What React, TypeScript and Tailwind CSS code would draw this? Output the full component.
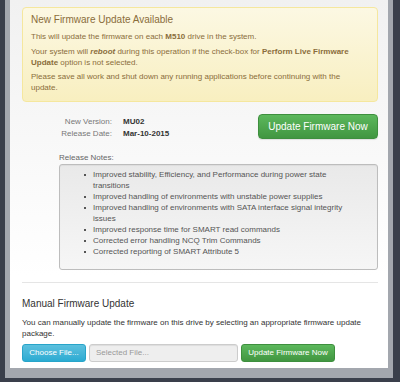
const NOTES = [
  "Improved stability, Efficiency, and Performance during power state transitions",
  "Improved handling of environments with unstable power supplies",
  "Improved handling of environments with SATA interface signal integrity issues",
  "Improved response time for SMART read commands",
  "Corrected error handling NCQ Trim Commands",
  "Corrected reporting of SMART Attribute 5",
];

export default function App() {
  return (
    <div className="w-[400px] h-[382px] bg-[#3a3f4b] pl-[5px] pr-[7px] pb-[4px] flex">
      <div className="flex-1 bg-[#a3a7ae] pl-[5px] pr-[5px] pb-[10px] flex">
        <div className="flex-1 flex flex-col bg-linear-to-b from-[#f1f1f1] to-white to-75% pl-[12px] pr-[10px] pt-[7px] pb-[6px] font-['Liberation_Sans',Arial,sans-serif] text-[8px] leading-[11px] text-[#333]">
          {/* Warning alert */}
          <div className="border border-[#f5e79e] rounded-[4px] bg-linear-to-b from-[#fcf8e3] to-[#f8efc0] pt-[6px] pb-[8px] pl-[8px] pr-[11px] text-[#8a6d3b]">
            <h4 className="text-[10px] leading-[12px] mb-[5px]">
              New Firmware Update Available
            </h4>
            <p>
              This will update the firmware on each <b>M510</b> drive in the
              system.
            </p>
            <p className="mt-[4px]">
              Your system will{" "}
              <b>
                <i>reboot</i>
              </b>{" "}
              during this operation if the check-box for{" "}
              <b>Perform Live Firmware Update</b> option is not selected.
            </p>
            <p className="mt-[3px]">
              Please save all work and shut down any running applications
              before continuing with the update.
            </p>
          </div>

          {/* Version row */}
          <div className="mt-[12px] flex items-start">
            <div className="mt-[2px] grid grid-cols-[90px_auto] gap-x-[11px] leading-[12px]">
              <span className="text-right text-[#777]">New Version:</span>
              <span className="font-bold text-[#333]">MU02</span>
              <span className="text-right text-[#777]">Release Date:</span>
              <span className="font-bold text-[#333]">Mar-10-2015</span>
            </div>
            <div className="flex-1" />
            <button className="w-[120px] h-[25px] rounded-[4px] border border-[#3e8f3e] bg-linear-to-b from-[#5cb85c] to-[#419641] text-white text-[10px] shadow-[0_1px_1px_rgba(0,0,0,0.1)]">
              Update Firmware Now
            </button>
          </div>

          {/* Release notes */}
          <div className="mt-[12px] ml-[37px]">
            <div className="text-[#666]">Release Notes:</div>
            <ul className="mt-[1px] h-[106px] border border-[#bdbdbd] rounded-[3px] bg-linear-to-b from-[#e9e9e9] to-[#f6f6f6] shadow-[inset_0_1px_1px_rgba(0,0,0,0.05)] pt-[4px] pl-[24px] pr-[17px] text-[#555]">
              {NOTES.map((n) => (
                <li key={n} className="flex">
                  <span className="w-[9px] shrink-0 pt-[5px]">
                    <span className="block w-[2px] h-[2px] bg-[#555]" />
                  </span>
                  <span>{n}</span>
                </li>
              ))}
            </ul>
          </div>

          <div className="mt-[12px] h-px bg-[#e5e5e5]" />

          {/* Manual update */}
          <h4 className="mt-[15px] text-[10px] leading-[12px] text-[#333]">
            Manual Firmware Update
          </h4>
          <p className="mt-[7px] text-[#333]">
            You can manually update the firmware on this drive by selecting an
            appropriate firmware update package.
          </p>
          <div className="mt-[5px] flex gap-[3px] h-[19px]">
            <button className="w-[64px] rounded-[3px] border border-[#28a4c9] bg-linear-to-b from-[#5bc0de] to-[#2aabd2] text-white">
              Choose File...
            </button>
            <div className="w-[149px] flex items-center rounded-[3px] border border-[#ccc] bg-[#eee] pl-[6px] text-[#999] shadow-[inset_0_1px_1px_rgba(0,0,0,0.075)]">
              Selected File...
            </div>
            <button className="w-[94px] rounded-[3px] border border-[#3e8f3e] bg-linear-to-b from-[#5cb85c] to-[#419641] text-white">
              Update Firmware Now
            </button>
          </div>
        </div>
      </div>
    </div>
  );
}
